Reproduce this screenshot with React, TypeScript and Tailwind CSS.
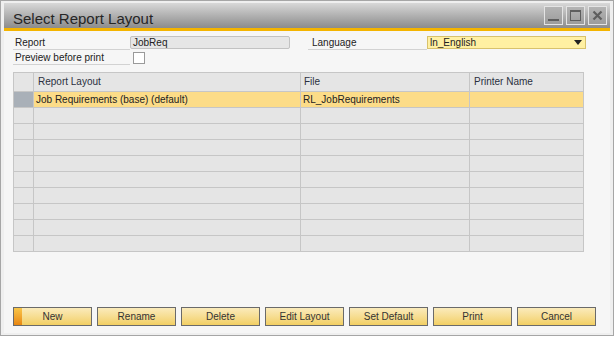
export default function App() {
  const rows = Array.from({ length: 10 }, (_, i) => i);
  const buttons = ['New', 'Rename', 'Delete', 'Edit Layout', 'Set Default', 'Print', 'Cancel'];

  return (
    <div className="w-[616px] h-[339px] bg-white font-['Liberation_Sans',Arial,sans-serif] text-[#222]">
      <div className="w-[614px] h-[336px] border border-[#a6a6a6] bg-[#efefef] pt-[2px] px-[3px] pb-[2px] flex flex-col">
        {/* title bar */}
        <div className="h-[25px] flex items-start justify-between bg-gradient-to-b from-[#d8d8d8] to-[#8c8c8c] pl-[9px] pr-[3px]">
          <span className="mt-[8px] text-[15px] leading-[15px] text-[#262626]">Select Report Layout</span>
          <div className="flex gap-[3px] mt-[3px]">
            <div className="w-[19px] h-[19px] border border-[#e4e4e4] bg-gradient-to-b from-[#b4b4b4] to-[#9c9c9c] flex items-end justify-center pb-[3px]">
              <div className="w-[11px] h-[2px] bg-[#5e5e5e]" />
            </div>
            <div className="w-[19px] h-[19px] border border-[#e4e4e4] bg-gradient-to-b from-[#b4b4b4] to-[#9c9c9c] flex items-center justify-center">
              <div className="w-[11px] h-[11px] border border-[#5e5e5e] border-t-2" />
            </div>
            <div className="w-[19px] h-[19px] border border-[#e4e4e4] bg-gradient-to-b from-[#b4b4b4] to-[#9c9c9c] flex items-center justify-center">
              <svg width="11" height="11" viewBox="0 0 11 11">
                <path d="M1.5 1.5 L9.5 9.5 M9.5 1.5 L1.5 9.5" stroke="#5e5e5e" strokeWidth="2.2" />
              </svg>
            </div>
          </div>
        </div>
        <div className="h-[3px] bg-[#f4b400]" />

        {/* content */}
        <div className="flex-1 bg-[#f6f6f6] pl-[9px] pt-[5px] pb-[7px] flex flex-col text-[10px] leading-[12px]">
          <div className="flex h-[14px]">
            <div className="w-[117px] border-b border-[#d2d2d2] pl-[2px] flex items-center">Report</div>
            <div className="w-[160px] h-[13px] bg-[#e6e6e6] border border-[#c2c2c2] rounded-[2px] pl-[2px] flex items-center">JobReq</div>
            <div className="ml-[18px] w-[119px] border-b border-[#d2d2d2] pl-[4px] flex items-center">Language</div>
            <div className="w-[159px] h-[13px] bg-[#fff0a2] border border-[#d8c26c] pl-[2px] pr-[3px] flex items-center justify-between">
              <span>ln_English</span>
              <svg width="8" height="5" viewBox="0 0 8 5">
                <path d="M0 0 H8 L4 5 Z" fill="#222" />
              </svg>
            </div>
          </div>
          <div className="flex h-[13px] mt-[2px]">
            <div className="w-[117px] border-b border-[#d2d2d2] pl-[2px] flex items-center">Preview before print</div>
            <div className="ml-[3px] w-[12px] h-[12px] bg-white border border-[#9a9a9a]" />
          </div>

          {/* grid */}
          <div className="mt-[7px] w-[571px] border-l border-t border-[#c6c6c6] bg-[#e5e5e5]">
            <div className="flex h-[19px]">
              <div className="w-[20px] border-r border-b border-[#c6c6c6]" />
              <div className="w-[267px] border-r border-b border-[#c6c6c6] pl-[4px] flex items-center text-[#2a3040]">Report Layout</div>
              <div className="w-[169px] border-r border-b border-[#c6c6c6] pl-[3px] flex items-center text-[#2a3040]">File</div>
              <div className="w-[114px] border-r border-b border-[#c6c6c6] pl-[4px] flex items-center text-[#2a3040]">Printer Name</div>
            </div>
            {rows.map((i) => (
              <div key={i} className="flex h-[16px]">
                <div className={`w-[20px] border-r border-b border-[#c6c6c6] ${i === 0 ? 'bg-[#a9b0b8]' : ''}`} />
                <div className={`w-[267px] border-r border-b border-[#c6c6c6] pl-[2px] flex items-center ${i === 0 ? 'bg-[#fcdc88]' : ''}`}>
                  {i === 0 ? 'Job Requirements (base) (default)' : ''}
                </div>
                <div className={`w-[169px] border-r border-b border-[#c6c6c6] pl-[2px] flex items-center ${i === 0 ? 'bg-[#fcdc88]' : ''}`}>
                  {i === 0 ? 'RL_JobRequirements' : ''}
                </div>
                <div className={`w-[114px] border-r border-b border-[#c6c6c6] ${i === 0 ? 'bg-[#fcdc88]' : ''}`} />
              </div>
            ))}
          </div>

          {/* buttons */}
          <div className="mt-auto flex gap-[5px]">
            {buttons.map((b, i) => (
              <div
                key={b}
                className="relative w-[79px] h-[19px] border border-[#6a6a6a] bg-gradient-to-b from-[#fbebbb] to-[#f2cf62] flex items-center justify-center text-[#333]"
              >
                {i === 0 && (
                  <div className="absolute left-0 top-0 bottom-0 w-[8px] bg-gradient-to-b from-[#f8c648] to-[#e8860e]" />
                )}
                <span className="relative">{b}</span>
              </div>
            ))}
          </div>
        </div>
      </div>
    </div>
  );
}
